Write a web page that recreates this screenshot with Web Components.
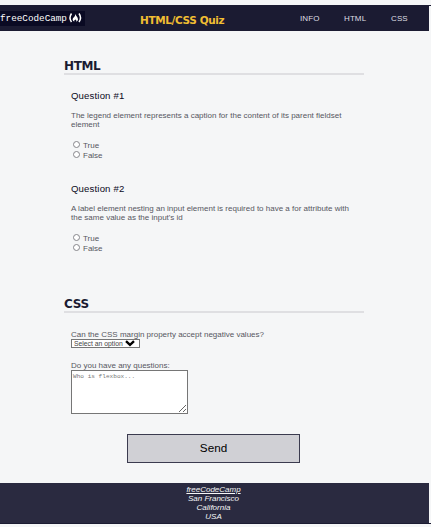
<!DOCTYPE html>
<html lang="en"><head><meta charset="utf-8"><title>HTML/CSS Quiz</title>
<style>
html,body{margin:0;width:431px;height:527px;overflow:hidden;background:#f5f6f7}
body{font:8px/9.3px "Liberation Sans",Arial,sans-serif;color:#55565f}
</style></head><body>
<quiz-page></quiz-page>
<script>
const define=(name,html)=>customElements.define(name,class extends HTMLElement{
  connectedCallback(){
    if(this.shadowRoot)return;
    this.attachShadow({mode:'open'}).innerHTML=html;
  }
});

define('quiz-header',`<style>
:host{display:flex;align-items:center;box-sizing:border-box;width:429px;height:26px;background:#1b1b32;color:#dfdfe2;font-size:8px}
.logo{width:85px;height:15px;margin-top:1px;background:#0a0a23;display:flex;align-items:center;color:#fff;font:9.3px/14px "Liberation Mono",monospace}
.logo span{white-space:pre}
.logo svg{margin:-1px 0 0 0}
h1{margin:3px 0 0 55px;width:84px;white-space:nowrap;font:bold 10.5px/16px "DejaVu Sans",Verdana,sans-serif;letter-spacing:-.38px;color:#f1be32}
nav{display:flex;margin-left:76px;line-height:12px;padding-top:1px;letter-spacing:.1px}
a{color:inherit;white-space:nowrap}
a:nth-child(1){width:44px}a:nth-child(2){width:47px}
</style>
<div class="logo"><span>freeCodeCamp</span><svg width="17" height="12" viewBox="0 0 17 12" fill="none" stroke="#fff" stroke-width="1.5"><path d="M4.5 1.5Q1.5 5.7 4.5 10M12 1.5Q15 5.7 12 10"/><path fill="#fff" stroke="none" d="M8.2 2C8.8 4 11 5 11 7.5Q11 9 9.3 9.7Q9.8 8.5 8.5 7.3Q8.3 8.4 7.3 8.2Q6.8 9 7.5 9.7Q5.5 9 5.6 7.3Q5.8 5.8 7.2 5Q8.2 4 8.2 2Z"/></svg></div>
<h1>HTML/CSS Quiz</h1><nav><a>INFO</a><a>HTML</a><a>CSS</a></nav>`);

define('quiz-section',`<style>
:host{display:block;width:300px}
h2{box-sizing:border-box;margin:0;height:18px;padding-top:1px;border-bottom:2px solid #dfdfe2;font:bold 12px/16px "DejaVu Sans",Verdana,sans-serif;letter-spacing:-.35px;color:#1b1b32}
.body{padding-left:7px}
</style><h2><slot name="title"></slot></h2><div class="body"><slot></slot></div>`);

define('quiz-option',`<style>
:host{display:flex;align-items:center;height:10px}
input{appearance:none;box-sizing:border-box;width:7px;height:7px;margin:-2px 3px 0 2px;border:1px solid #85858a;border-radius:50%;background:#fff}
</style><input type="radio"><span><slot></slot></span>`);

define('quiz-question',`<style>
:host{display:block;height:93px}
h3{margin:0 0 9px;font:9.6px/12px "Liberation Sans",Arial,sans-serif;letter-spacing:.15px;color:#0a0a23}
p{margin:0 0 11px;white-space:nowrap;line-height:9.3px}
</style><h3><slot name="title"></slot></h3><p><slot></slot></p><quiz-option>True</quiz-option><quiz-option>False</quiz-option>`);

define('quiz-select',`<style>
:host{box-sizing:border-box;display:flex;align-items:center;width:69px;height:9px;border:1px solid #767676;background:#fff;padding-left:2px;font-size:6.8px;line-height:7px;color:#444}
span{width:51px;white-space:nowrap}
</style><span><slot></slot></span><svg width="10" height="7" viewBox="0 0 10 7" fill="none" stroke="#000" stroke-width="2.4"><path d="M1 1.2 5 4.8 9 1.2"/></svg>`);

define('quiz-textarea',`<style>
:host{display:block;height:44px}
textarea{display:block;box-sizing:border-box;width:117px;height:44px;margin:0;padding:1px;border:1px solid #767676;border-radius:0;background:#fff;resize:both;font:6.1px/9px "Liberation Mono",monospace}
textarea::placeholder{color:#757575}
</style><textarea placeholder="Who is flexbox..."></textarea>`);

define('send-button',`<style>
:host{display:block}
button{display:block;box-sizing:border-box;width:173px;height:29px;padding:0 0 1px;border:1px solid #3b3b4f;background:#d0d0d5;font:11.7px/26px "Liberation Sans",Arial,sans-serif;color:#000}
</style><button><slot></slot></button>`);

define('quiz-footer',`<style>
:host{box-sizing:border-box;display:block;width:429px;height:40px;padding-top:2px;background:#2a2a40;color:#f5f6f7;text-align:center;font:italic 8px/9px "Liberation Sans",Arial,sans-serif}
address{padding-right:2px}
</style><address><u>freeCodeCamp</u><br>San Francisco<br>California<br>USA</address>`);

define('quiz-page',`<style>
:host{display:flex;flex-direction:column;height:527px;box-sizing:border-box;padding-top:5px;background:#f5f6f7}
.top{background:linear-gradient(#1b1b32 1px,transparent 1px)}
main{height:452px;box-sizing:border-box;padding:26px 0 0 64px}
.questions{padding-top:15px}
.fields{padding-top:17px}
.css{margin-top:19px}
.fields quiz-select{margin-bottom:13px}
.label{height:9px;line-height:10px}
send-button{margin:20px 0 0 63px}
.bottom{border-bottom:1px solid #1b1b32}
</style>
<div class="top"><quiz-header></quiz-header></div>
<main>
<quiz-section><span slot="title">HTML</span><div class="questions">
<quiz-question><span slot="title">Question #1</span>The legend element represents a caption for the content of its parent fieldset<br>element</quiz-question>
<quiz-question><span slot="title">Question #2</span>A label element nesting an input element is required to have a for attribute with<br>the same value as the input's id</quiz-question>
</div></quiz-section>
<quiz-section class="css"><span slot="title">CSS</span><div class="fields">
<div class="label">Can the CSS margin property accept negative values?</div><quiz-select>Select an option</quiz-select>
<div class="label">Do you have any questions:</div><quiz-textarea></quiz-textarea></div></quiz-section>
<send-button>Send</send-button>
</main>
<div class="bottom"><quiz-footer></quiz-footer></div>`);
</script></body></html>
